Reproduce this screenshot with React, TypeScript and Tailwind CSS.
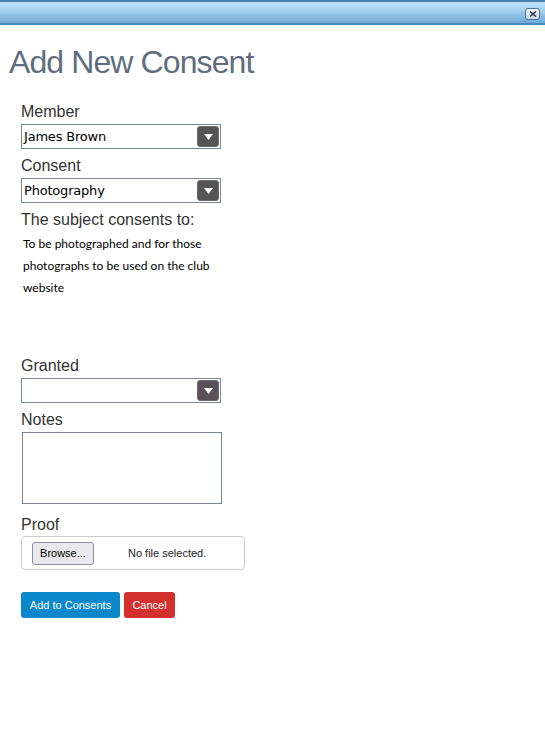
function Caret() {
  return (
    <svg width="9" height="6" viewBox="0 0 9 6" className="block">
      <path d="M0 0 H9 L4.5 6 Z" fill="#ffffff" />
    </svg>
  )
}

function Select({ value, tint = "#555555" }: { value: string; tint?: string }) {
  return (
    <div className="flex h-[25px] w-[200px] items-center justify-between border border-[#7b8794] bg-white pl-[2px] pr-[1px]">
      <span className="text-[13px] leading-none text-black [font-family:'DejaVu_Sans',Verdana,sans-serif] tracking-[-0.2px]">
        {value}
      </span>
      <span
        className="flex h-[21px] w-[22px] items-center justify-center rounded-[3px] border border-[#6b6b6b]"
        style={{ backgroundColor: tint }}
      >
        <Caret />
      </span>
    </div>
  )
}

function Label({ children }: { children: React.ReactNode }) {
  return <div className="text-[16px] leading-[18px] text-[#333333]">{children}</div>
}

export default function App() {
  return (
    <div className="min-h-[738px] w-[545px] bg-white [font-family:'Liberation_Sans',Arial,sans-serif]">
      <div className="flex h-[25px] items-start justify-end border-t-2 border-b-2 border-t-[#4a7eb3] border-b-[#4f86ba] bg-gradient-to-b from-[#c3e3f8] via-[#9ccbed] to-[#6fa8d6] pr-[5px] pt-[6px]">
        <button className="flex h-[12px] w-[15px] items-center justify-center rounded-[3px] border border-[#4d7396] bg-gradient-to-b from-[#f4f8fb] to-[#c9d8e6]">
          <svg width="8" height="6" viewBox="0 0 8 6">
            <path d="M1 0.5 L7 5.5 M7 0.5 L1 5.5" stroke="#2c3e50" strokeWidth="1.6" />
          </svg>
        </button>
      </div>

      <h1 className="ml-[9px] mt-[19px] text-[32px] leading-[36px] tracking-[-0.9px] text-[#5e6e7e]">Add New Consent</h1>

      <div className="ml-[21px] mt-[23px] flex flex-col">
        <Label>Member</Label>
        <div className="mt-[3px]">
          <Select value="James Brown" />
        </div>

        <div className="mt-[8px]">
          <Label>Consent</Label>
        </div>
        <div className="mt-[3px]">
          <Select value="Photography" />
        </div>

        <div className="mt-[8px]">
          <Label>The subject consents to:</Label>
        </div>
        <p className="ml-[2px] mt-[4px] h-[124px] w-[195px] text-[12px] leading-[22px] text-black [font-family:Lato,'Open_Sans',sans-serif]">
          To be photographed and for those photographs to be used on the club website
        </p>

        <Label>Granted</Label>
        <div className="mt-[3px]">
          <Select value="" tint="#5b4f5c" />
        </div>

        <div className="mt-[8px]">
          <Label>Notes</Label>
        </div>
        <textarea className="ml-[1px] mt-[3px] h-[72px] w-[200px] resize-none border border-[#7b8794] bg-white" />

        <div className="mt-[12px]">
          <Label>Proof</Label>
        </div>
        <div className="mt-[2px] flex h-[34px] w-[224px] items-center rounded-[4px] border border-[#cccccc] pl-[10px]">
          <span className="flex h-[23px] w-[62px] items-center justify-center rounded-[3px] border border-[#8f8f9d] bg-[#e9e9ed] text-[11px] text-black">
            Browse...
          </span>
          <span className="ml-[34px] text-[11px] text-[#222222]">No file selected.</span>
        </div>

        <div className="mt-[22px] flex gap-[4px]">
          <button className="h-[26px] w-[99px] rounded-[3px] bg-[#0b87cc] text-[11px] text-white">Add to Consents</button>
          <button className="h-[26px] w-[51px] rounded-[3px] bg-[#d2302f] text-[11px] text-white">Cancel</button>
        </div>
      </div>
    </div>
  )
}
